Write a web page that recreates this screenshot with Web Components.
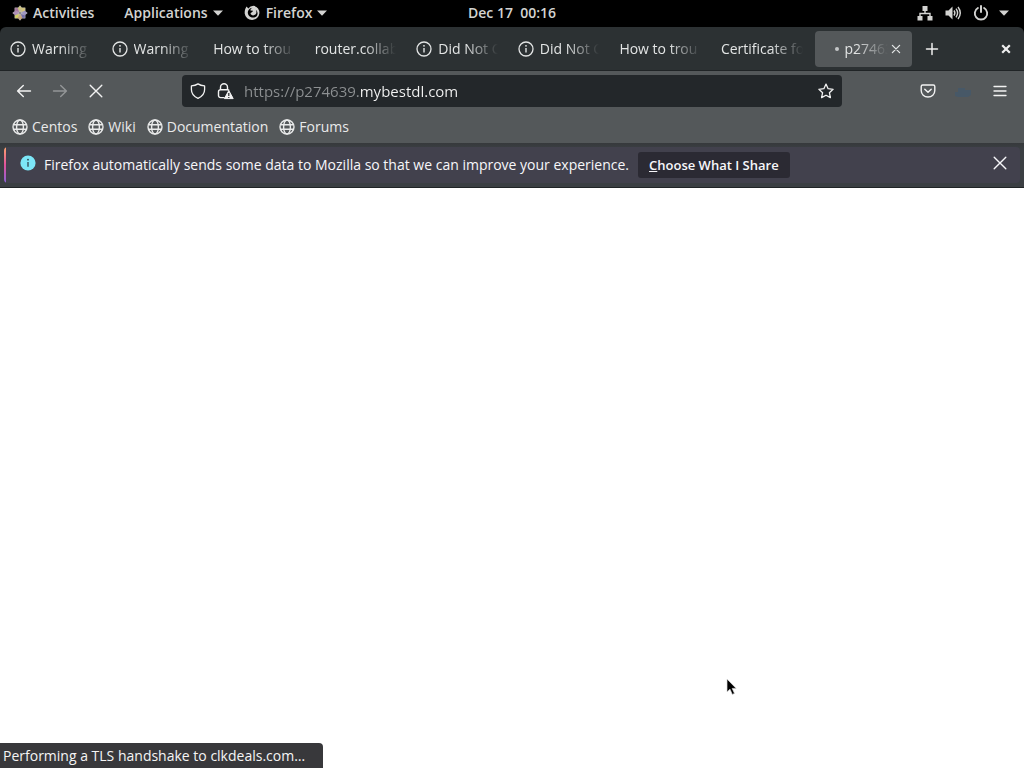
<!DOCTYPE html>
<html lang="en">
<head>
<meta charset="utf-8">
<title>Firefox</title>
<style>
html, body { height: 100%; margin: 0; }
body { font: 14px/20px "Open Sans", "Noto Sans", sans-serif; background: #fff; overflow: hidden; }
</style>
</head>
<body>
<desktop-screen></desktop-screen>
<script>
const ICONS = {
  info: '<circle cx="8" cy="8" r="7" fill="none" stroke="currentColor" stroke-width="1.3"/><path d="M8 7v4.6" stroke="currentColor" stroke-width="1.4"/><circle cx="8" cy="4.8" r=".9" fill="currentColor"/>',
  infofull: '<circle cx="8" cy="8" r="7.6" fill="#7ce6f8"/><path d="M8 7v4.8" stroke="#2f4450" stroke-width="1.3"/><circle cx="8" cy="4.7" r=".9" fill="#2f4450"/>',
  globe: '<g fill="none" stroke="currentColor" stroke-width="1.4"><circle cx="8" cy="8" r="7"/><ellipse cx="8" cy="8" rx="3.4" ry="7"/><path d="M1.5 5.8h13M1.5 10.2h13"/></g>',
  back: '<path d="M14.500 8H1.8M7.3 2.4 1.6 8l5.7 5.6" fill="none" stroke="currentColor" stroke-width="1.4" stroke-linecap="round" stroke-linejoin="round"/>',
  forward: '<path d="M1.500 8h12.700M8.7 2.4 14.4 8l-5.7 5.6" fill="none" stroke="currentColor" stroke-width="1.4" stroke-linecap="round" stroke-linejoin="round"/>',
  cross: '<path d="M2.200 2.200l11.600 11.600M13.800 2.200 2.200 13.800" fill="none" stroke="currentColor" stroke-width="1.400" stroke-linecap="round"/>',
  smallcross: '<path d="M4.400 4.400l7.200 7.200M11.600 4.400l-7.200 7.200" fill="none" stroke="currentColor" stroke-width="1.300" stroke-linecap="round"/>',
  boldcross: '<path d="M4.2 4.2l7.6 7.6M11.8 4.2l-7.6 7.6" fill="none" stroke="currentColor" stroke-width="2.2"/>',
  plus: '<path d="M8 2.500v11M2.500 8h11" fill="none" stroke="currentColor" stroke-width="1.5" stroke-linecap="round"/>',
  shield: '<path d="M8 .9c2 1.3 4.2 1.8 6.6 2v3.6c0 3.9-2.400 7-6.600 8.800C3.800 13.500 1.400 10.400 1.400 6.500V2.900C3.800 2.700 6 2.200 8 .9z" fill="none" stroke="currentColor" stroke-width="1.3" stroke-linejoin="round"/>',
  lock: '<path d="M6.500 14.600H2.500A2 2 0 0 1 .5 12.600V8.700A2 2 0 0 1 2.500 6.700h7a2 2 0 0 1 1.600.8M2.500 6.500V4.300a3.500 3.500 0 0 1 7 0v2.200" fill="none" stroke="currentColor" stroke-width="1.400"/><path d="M10.800 7.600 15.200 15.600H6.400z" fill="currentColor" stroke="currentColor" stroke-linejoin="round"/><path d="M10.800 10v3M10.800 13.900v1.200" stroke="#23272a" stroke-width="1.200"/>',
  star: '<path d="M8 1.100l2.100 4.600 5 .6-3.700 3.400 1 4.900L8 12.200l-4.400 2.400 1-4.900L.9 6.300l5-.6z" fill="none" stroke="currentColor" stroke-width="1.300" stroke-linejoin="round"/>',
  pocket: '<path d="M2.700 2h10.600c.9 0 1.500.6 1.500 1.500v4c0 3.800-3 6.500-6.800 6.500S1.200 11.300 1.200 7.500v-4C1.200 2.600 1.800 2 2.700 2z" fill="none" stroke="currentColor" stroke-width="1.400"/><path d="M4.800 6.300 8 9.300l3.200-3" fill="none" stroke="currentColor" stroke-width="1.500" stroke-linecap="round" stroke-linejoin="round"/>',
  account: '<path d="M-1 13V9h3V5h7v2h6v5l-3 2H2z" fill="#44596a" opacity=".8"/>',
  menu: '<path d="M2 3.500h12M2 8h12M2 12.500h12" stroke="currentColor" stroke-width="1.300" stroke-linecap="round"/>',
  caret: '<path d="M3 5.600h10L8 10.800z" fill="currentColor"/>',
  network: '<path d="M5.500 1h5v5h-5zM.5 11h5v4.500h-5zM10.500 11h5v4.500h-5z" fill="currentColor"/><path d="M8 5v3.500M3 11V8.500h10V11" fill="none" stroke="currentColor" stroke-width="1.400"/>',
  volume: '<path d="M.5 5.500h3L7.500 1.500v13L3.500 10.500h-3z" fill="currentColor"/><path d="M9 5.500q1.800 2.500 0 5M11 3.700q3.200 4.300 0 8.600M13 2q4.600 6 0 12" fill="none" stroke="currentColor" stroke-width="1.400"/>',
  power: '<path d="M4.900 3A6.200 6.200 0 1 0 11.100 3" fill="none" stroke="currentColor" stroke-width="1.900" stroke-linecap="round"/><path d="M8 1v6" stroke="currentColor" stroke-width="2" stroke-linecap="round"/>',
  firefox: '<path d="M2.600 1.600 4.300 3.400Q6.200.8 9.500.8 15.400 2 15.400 8.200A7.400 7.400 0 0 1 .7 8.500C.6 6 1.100 3.500 2.600 1.600z" fill="currentColor"/><path d="M8.500 2.700c-1.500.5-2.300 1.800-2 2.700l2.500.3c0 1.300-2.100 1.500-2.500 2.600.4 2.200 3.200 2.700 4.900 1.300 1.400-1.300 1.200-3.600.4-4.900 2.400 1.900 2.400 5.800-.3 7.300-3.500 1.700-7.500-.5-7.700-4.200 0-2.500 1.700-5 4.700-5.100z" fill="#000"/>',
  centos: '<g stroke="#bbb" stroke-width=".5"><path d="M8 .8 10.600 3.500V7H8zM8 .8 5.400 3.500V7H8z" fill="#d8c75a"/><path d="M15.200 8 12.500 10.600H9V8zM15.200 8 12.500 5.400H9V8z" fill="#8a7cc8"/><path d="M8 15.200 5.400 12.500V9H8zM8 15.200 10.600 12.500V9H8z" fill="#d69a50"/><path d="M.8 8 3.500 5.400H7V8zM.8 8 3.500 10.600H7V8z" fill="#a870b5"/><path d="M2.800 2.800h3L7.600 7.600 2.800 5.800z" fill="#a4749c"/><path d="M13.200 2.800v3L8.400 7.600l1.800-4.800z" fill="#d5c478"/><path d="M13.200 13.200h-3L8.400 8.400l4.800 1.800z" fill="#726ca8"/><path d="M2.800 13.200v-3l4.800-1.800-1.800 4.800z" fill="#d5d060"/></g>'
};

const BASE = `:host,*{box-sizing:border-box}
button{font:inherit;color:inherit;background:none;border:0;padding:0;margin:0;display:inline-flex;align-items:center;justify-content:center}`;

function define(name, render) {
  customElements.define(name, class extends HTMLElement {
    connectedCallback() {
      if (this.shadowRoot) return;
      const template = document.createElement('template');
      template.innerHTML = render(this);
      this.attachShadow({ mode: 'open' }).append(template.content.cloneNode(true));
    }
  });
}

define('ui-icon', el => `<style>
:host{display:inline-flex;flex:none;width:16px;height:16px}
svg{width:100%;height:100%;overflow:visible}
</style><svg viewBox="0 0 16 16" aria-hidden="true">${ICONS[el.getAttribute('name')]}</svg>`);

define('icon-button', el => `<style>${BASE}
:host{display:inline-flex;flex:none;width:36px;height:36px}
button{width:100%;height:100%}
</style><button type="button" aria-label="${el.getAttribute('label')}"><ui-icon name="${el.getAttribute('icon')}"></ui-icon></button>`);

define('top-bar', () => `<style>${BASE}
:host{display:grid;grid-template-columns:1fr auto 1fr;align-items:center;height:27px;padding:0 12px 2px;background:#000;color:#d3d3d1;font-weight:600}
nav{display:flex;gap:18px}
button{gap:2px}
nav button:first-child{gap:5px;margin-right:12px}
.ff ui-icon:first-child{margin-right:4px}
.date{white-space:pre}
.status{display:flex;justify-self:end}
.status button{gap:12px}
.status .caret{margin-left:-5px}
</style>
<nav aria-label="Desktop">
<button type="button"><ui-icon name="centos"></ui-icon>Activities</button>
<button type="button">Applications<ui-icon name="caret"></ui-icon></button>
<button type="button" class="ff"><ui-icon name="firefox"></ui-icon>Firefox<ui-icon name="caret"></ui-icon></button>
</nav>
<button type="button" class="date">Dec 17  00:16</button>
<div class="status"><button type="button" aria-label="System"><ui-icon name="network"></ui-icon><ui-icon name="volume"></ui-icon><ui-icon name="power"></ui-icon><ui-icon name="caret" class="caret"></ui-icon></button></div>`);

define('browser-tab', el => {
  const icon = el.getAttribute('icon');
  const active = el.hasAttribute('active');
  return `<style>${BASE}
:host{display:flex;flex:1 1 0;min-width:0;align-items:center;height:36px;margin:0 2px;border-radius:4px;color:#e3e5e5}
:host([active]){background:#54585a}
.tab{flex:1;min-width:0;height:36px;padding:0 8px;gap:6px;justify-content:flex-start}
:host([active]) .tab{padding:0 0 0 20px}
.label{flex:1;min-width:0;overflow:hidden;white-space:nowrap;text-align:left;-webkit-mask-image:linear-gradient(to left,transparent,#000 32px);mask-image:linear-gradient(to left,transparent,#000 32px)}
.dot{flex:none;width:4px;height:4px;border-radius:50%;background:#c4c7c8}
icon-button{width:16px;height:20px;margin-right:8px}
</style><button type="button" class="tab" role="tab" aria-selected="${active}">${active ? '<span class="dot"></span>' : ''}${icon ? `<ui-icon name="${icon}"></ui-icon>` : ''}<span class="label"><slot></slot></span></button>${active ? '<icon-button icon="smallcross" label="Close tab"></icon-button>' : ''}`;
});

define('tab-strip', () => `<style>${BASE}
:host{display:flex;align-items:center;height:44px;background:#2c3133;color:#eee;border-bottom:1px solid #202426;border-radius:6px 6px 0 0}
.tabs{display:flex;flex:1;min-width:0}
.close{margin:0 0 0 38px}
</style>
<div class="tabs" role="tablist">
<browser-tab icon="info">Warning</browser-tab>
<browser-tab icon="info">Warning</browser-tab>
<browser-tab>How to trou</browser-tab>
<browser-tab>router.collab</browser-tab>
<browser-tab icon="info">Did Not C</browser-tab>
<browser-tab icon="info">Did Not C</browser-tab>
<browser-tab>How to trou</browser-tab>
<browser-tab>Certificate fo</browser-tab>
<browser-tab active>p27463</browser-tab>
</div>
<icon-button icon="plus" label="New tab"></icon-button>
<icon-button class="close" icon="boldcross" label="Close window"></icon-button>`);

define('nav-bar', () => `<style>${BASE}
:host{display:flex;align-items:center;height:40px;padding:0 6px;background:#54585a;color:#f2f2f2}
.off{opacity:.4}
form{display:flex;flex:1;min-width:0;align-items:center;height:32px;margin:0 68px;padding-right:2px;border-radius:4px;background:#23272a}
form icon-button{width:28px;height:32px}
form icon-button:first-child{width:32px}
.lock{margin-left:-2px}
input{flex:1;min-width:0;height:32px;margin-left:4px;padding:0;border:0;outline:0;font:inherit;font-size:15px;color:transparent;background:linear-gradient(to right,#8d9092 var(--scheme-end),#f4f4f4 var(--scheme-end));-webkit-background-clip:text;background-clip:text}
</style>
<icon-button icon="back" label="Back"></icon-button>
<icon-button class="off" icon="forward" label="Forward"></icon-button>
<icon-button icon="cross" label="Stop"></icon-button>
<form style="--scheme-end:115px">
<icon-button icon="shield" label="Tracking protection"></icon-button>
<icon-button class="lock" icon="lock" label="Connection not secure"></icon-button>
<input type="text" aria-label="Address" value="https://p274639.mybestdl.com">
<icon-button icon="star" label="Bookmark this page"></icon-button>
</form>
<icon-button icon="pocket" label="Save to Pocket"></icon-button>
<icon-button icon="account" label="Account"></icon-button>
<icon-button icon="menu" label="Menu"></icon-button>`);

define('bookmark-link', () => `<style>${BASE}
:host{display:inline-flex}
a{display:inline-flex;align-items:center;gap:4px;color:inherit;text-decoration:none}
</style><a href="#"><ui-icon name="globe"></ui-icon><slot></slot></a>`);

define('bookmarks-bar', () => `<style>${BASE}
:host{display:flex;align-items:center;gap:11px;height:32px;padding:0 12px;background:#54585a;color:#e9eaea}
</style>
<bookmark-link>Centos</bookmark-link><bookmark-link>Wiki</bookmark-link><bookmark-link>Documentation</bookmark-link><bookmark-link>Forums</bookmark-link>`);

define('notice-bar', () => `<style>${BASE}
:host{display:block;padding:4px;background:linear-gradient(#36393c,#3b3f43 6px);border-bottom:1px solid #202426;color:#f7f7fa}
.box{display:flex;align-items:center;height:36px;border-radius:4px;background:#42414d;padding-left:16px;position:relative;overflow:hidden}
.box::before{content:"";position:absolute;left:0;top:0;bottom:0;width:2px;background:linear-gradient(#ffa36b,#e0529c 50%,#8a62d8)}
ui-icon,icon-button{margin-bottom:4px}
p{margin:0 9px 0 8px;white-space:nowrap}
.share{height:26px;padding:0 11px;border-radius:3px;background:#2b2a33;font-size:13px;font-weight:600}
icon-button{margin-left:auto;margin-right:2px}
</style>
<div class="box" role="status"><ui-icon name="infofull"></ui-icon>
<p>Firefox automatically sends some data to Mozilla so that we can improve your experience.</p>
<button type="button" class="share"><span><u>C</u>hoose What I Share</span></button>
<icon-button icon="cross" label="Dismiss"></icon-button></div>`);

define('status-panel', () => `<style>${BASE}
:host{position:absolute;left:0;bottom:0;height:25px;line-height:25px;padding:0 18px 0 3px;background:#38383b;color:#f5f5f5;border-radius:0 4px 0 0;white-space:nowrap}
</style><slot></slot>`);

define('mouse-pointer', () => `<style>
:host{position:absolute;left:726px;top:678px;width:12px;height:18px}
svg{display:block}
</style><svg width="12" height="18" viewBox="0 0 12 18" aria-hidden="true"><path d="M1 1v13l3-2.800 2.300 5.200 2.200-1-2.300-5h4z" fill="#000" stroke="#ddd" stroke-width=".7"/></svg>`);

define('desktop-screen', () => `<style>
:host{display:flex;flex-direction:column;height:100vh;background:#000}
main{flex:1;position:relative;background:#fff}
</style>
<top-bar></top-bar><tab-strip></tab-strip><nav-bar></nav-bar><bookmarks-bar></bookmarks-bar><notice-bar></notice-bar>
<main></main>
<status-panel>Performing a TLS handshake to clkdeals.com…</status-panel>
<mouse-pointer></mouse-pointer>`);
</script>
</body>
</html>
